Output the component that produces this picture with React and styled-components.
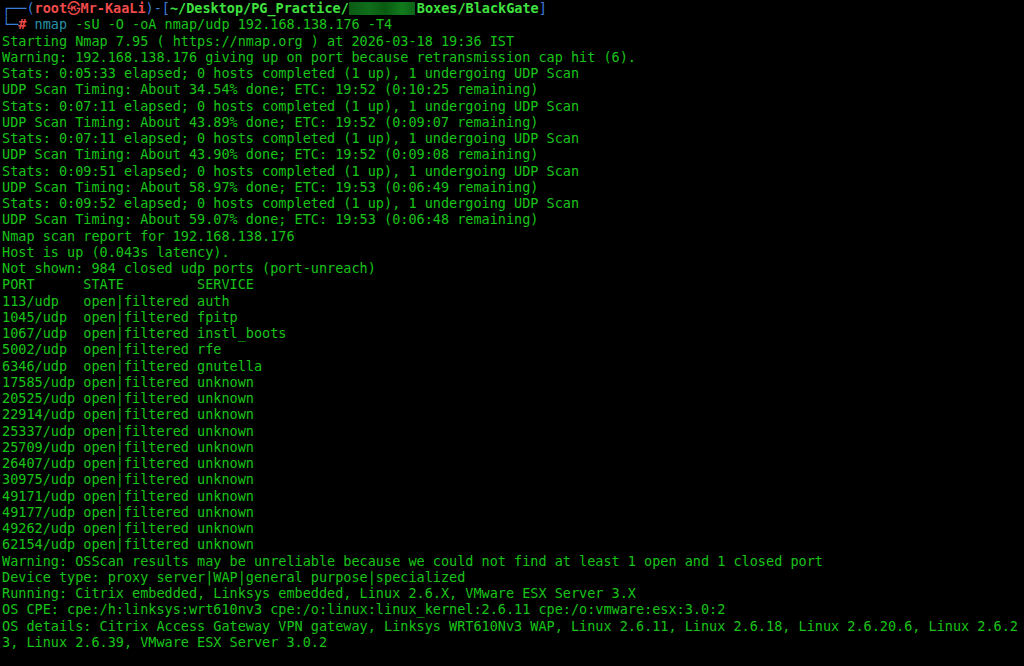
import React from 'react';
import styled, { createGlobalStyle } from 'styled-components';

const GlobalStyle = createGlobalStyle`
    html, body {
        margin: 0;
        padding: 0;
        background: #000;
    }
`

const Terminal = styled.div`
    width: 1024px;
    height: 666px;
    box-sizing: border-box;
    padding: 0 0 0 2px;
    background: #000;
    color: #19c419;
    font-family: "DejaVu Sans Mono", "Liberation Mono", "Noto Sans CJK JP", monospace;
    font-size: 13.5px;
    line-height: 16.25px;
    overflow: hidden;
`

const Line = styled.div`
    white-space: pre;
    height: 16.25px;
`

const Frame = styled.span`
    color: #3b7dd8;
`

const User = styled.span`
    color: #ef4b4b;
    font-weight: bold;
`

const Path = styled.span`
    color: #3fe03f;
    font-weight: bold;
`

const Hash = styled.span`
    color: #ef4b4b;
    font-weight: bold;
`

const Command = styled.span`
    color: #2691a8;
`

const Redacted = styled.span`
    display: inline-block;
    width: 66px;
    height: 13px;
    margin-right: 2px;
    vertical-align: -2px;
    background: linear-gradient(90deg, #0b5a14 0%, #0f6e1a 30%, #0a5a12 55%, #117a1c 80%, #0c6416 100%);
    filter: blur(0.6px);
`

const output = [
    'Starting Nmap 7.95 ( https://nmap.org ) at 2026-03-18 19:36 IST',
    'Warning: 192.168.138.176 giving up on port because retransmission cap hit (6).',
    'Stats: 0:05:33 elapsed; 0 hosts completed (1 up), 1 undergoing UDP Scan',
    'UDP Scan Timing: About 34.54% done; ETC: 19:52 (0:10:25 remaining)',
    'Stats: 0:07:11 elapsed; 0 hosts completed (1 up), 1 undergoing UDP Scan',
    'UDP Scan Timing: About 43.89% done; ETC: 19:52 (0:09:07 remaining)',
    'Stats: 0:07:11 elapsed; 0 hosts completed (1 up), 1 undergoing UDP Scan',
    'UDP Scan Timing: About 43.90% done; ETC: 19:52 (0:09:08 remaining)',
    'Stats: 0:09:51 elapsed; 0 hosts completed (1 up), 1 undergoing UDP Scan',
    'UDP Scan Timing: About 58.97% done; ETC: 19:53 (0:06:49 remaining)',
    'Stats: 0:09:52 elapsed; 0 hosts completed (1 up), 1 undergoing UDP Scan',
    'UDP Scan Timing: About 59.07% done; ETC: 19:53 (0:06:48 remaining)',
    'Nmap scan report for 192.168.138.176',
    'Host is up (0.043s latency).',
    'Not shown: 984 closed udp ports (port-unreach)',
    'PORT      STATE         SERVICE',
    '113/udp   open|filtered auth',
    '1045/udp  open|filtered fpitp',
    '1067/udp  open|filtered instl_boots',
    '5002/udp  open|filtered rfe',
    '6346/udp  open|filtered gnutella',
    '17585/udp open|filtered unknown',
    '20525/udp open|filtered unknown',
    '22914/udp open|filtered unknown',
    '25337/udp open|filtered unknown',
    '25709/udp open|filtered unknown',
    '26407/udp open|filtered unknown',
    '30975/udp open|filtered unknown',
    '49171/udp open|filtered unknown',
    '49177/udp open|filtered unknown',
    '49262/udp open|filtered unknown',
    '62154/udp open|filtered unknown',
    'Warning: OSScan results may be unreliable because we could not find at least 1 open and 1 closed port',
    'Device type: proxy server|WAP|general purpose|specialized',
    'Running: Citrix embedded, Linksys embedded, Linux 2.6.X, VMware ESX Server 3.X',
    'OS CPE: cpe:/h:linksys:wrt610nv3 cpe:/o:linux:linux_kernel:2.6.11 cpe:/o:vmware:esx:3.0:2',
    'OS details: Citrix Access Gateway VPN gateway, Linksys WRT610Nv3 WAP, Linux 2.6.11, Linux 2.6.18, Linux 2.6.20.6, Linux 2.6.2',
    '3, Linux 2.6.39, VMware ESX Server 3.0.2',
];

export default function App() {
    return (
        <>
            <GlobalStyle />
            <Terminal>
                <Line>
                    <Frame>┌──(</Frame>
                    <User>root㉿Mr-KaaLi</User>
                    <Frame>)-[</Frame>
                    <Path>~/Desktop/PG_Practice/</Path>
                    <Redacted />
                    <Path>Boxes/BlackGate</Path>
                    <Frame>]</Frame>
                </Line>
                <Line>
                    <Frame>└─</Frame>
                    <Hash>#</Hash>
                    {' '}
                    <Command>nmap</Command>
                    {' -sU -O -oA nmap/udp 192.168.138.176 -T4'}
                </Line>
                {output.map((text, i) => (
                    <Line key={i}>{text}</Line>
                ))}
            </Terminal>
        </>
    )
};
